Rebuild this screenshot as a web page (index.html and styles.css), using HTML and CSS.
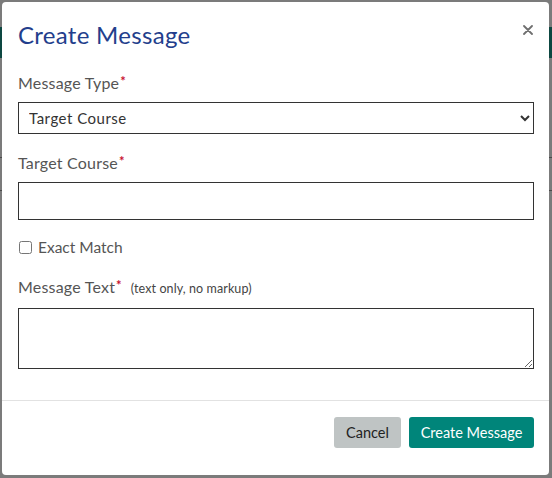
FILE: index.html
```html
<!DOCTYPE html>
<html>
<head>
<meta charset="utf-8">
<link rel="stylesheet" href="styles.css">
</head>
<body>
<div class="backdrop">
  <div class="bg-bar"></div>
  <div class="bg-line l1"></div>
  <div class="bg-line l2"></div>
</div>
<div class="modal">
  <div class="modal-header">
    <h1 class="modal-title">Create Message</h1>
    <button class="close" type="button" aria-label="Close">
      <svg width="10" height="10" viewBox="0 0 10 10"><path d="M1 1L9 9M9 1L1 9" stroke="#6f6f6f" stroke-width="1.8" stroke-linecap="round"/></svg>
    </button>
  </div>
  <div class="modal-body">
    <div class="field">
      <label class="label">Message Type<span class="req">*</span></label>
      <select class="select">
        <option>Target Course</option>
      </select>
    </div>
    <div class="field">
      <label class="label">Target Course<span class="req">*</span></label>
      <input class="input" type="text">
    </div>
    <div class="check-row">
      <input class="checkbox" type="checkbox" id="em">
      <label class="check-label" for="em">Exact Match</label>
    </div>
    <div class="field">
      <label class="label">Message Text<span class="req">*</span><span class="hint">(text only, no markup)</span></label>
      <textarea class="textarea"></textarea>
    </div>
  </div>
  <div class="modal-footer">
    <button class="btn btn-cancel" type="button">Cancel</button>
    <button class="btn btn-primary" type="button">Create Message</button>
  </div>
</div>
</body>
</html>
```
FILE: styles.css
```css
html, body {
  margin: 0;
  padding: 0;
  width: 552px;
  height: 478px;
  overflow: hidden;
  background: #7b7b7b;
  font-family: "Lato", "Open Sans", sans-serif;
}
.backdrop {
  position: absolute;
  inset: 0;
}
.bg-bar {
  position: absolute;
  left: 0;
  right: 0;
  top: 27px;
  height: 31px;
  background: #0d4741;
}
.bg-line {
  position: absolute;
  left: 0;
  right: 0;
  height: 1px;
  background: #4a4a4a;
}
.l1 { top: 157px; }
.l2 { top: 190px; }
.modal {
  position: absolute;
  left: 2px;
  top: 2px;
  width: 547px;
  height: 473px;
  background: #fff;
  border-radius: 4px;
  display: flex;
  flex-direction: column;
  box-sizing: border-box;
}
.modal-header {
  display: flex;
  justify-content: space-between;
  align-items: flex-start;
  padding: 19px 16px 0 16px;
}
.modal-title {
  margin: 0;
  font-size: 24px;
  font-weight: 400;
  letter-spacing: 0.3px;
  color: #233e8c;
  line-height: 28px;
}
.close {
  border: 0;
  background: none;
  padding: 0;
  margin: 4px 0 0 0;
  width: 10px;
  height: 10px;
  display: flex;
}
.modal-body {
  padding: 24px 16px 0 16px;
  flex: 1;
}
.field {
  display: flex;
  flex-direction: column;
  margin-bottom: 19px;
}
.label {
  font-size: 16px;
  letter-spacing: 0.2px;
  color: #555;
  line-height: 20px;
  margin-bottom: 9px;
}
.req {
  color: #c8102e;
  font-size: 13px;
  font-weight: 700;
  vertical-align: top;
  line-height: 17px;
  margin-left: 1px;
}
.hint {
  font-size: 12.5px;
  letter-spacing: 0.1px;
  color: #444;
  margin-left: 9px;
}
.select {
  height: 32px;
  border: 1px solid #333;
  border-radius: 0;
  background: #fff;
  font-family: "Lato", sans-serif;
  font-size: 15px;
  letter-spacing: 0.5px;
  color: #333;
  padding: 0 6px;
  box-sizing: border-box;
  width: 516px;
}
.input {
  height: 38px;
  border: 1px solid #333;
  border-radius: 0;
  box-sizing: border-box;
  width: 516px;
  margin: 0;
}
.check-row {
  display: flex;
  align-items: center;
  margin-top: -1px;
  margin-bottom: 21px;
}
.checkbox {
  margin: 0 6px 0 1px;
  width: 13px;
  height: 13px;
}
.check-label {
  font-size: 15.5px;
  color: #555;
}
.textarea {
  height: 61px;
  width: 516px;
  box-sizing: border-box;
  border: 1px solid #333;
  border-radius: 0;
  margin: 0;
}
.modal-footer {
  border-top: 1px solid #e2e2e2;
  display: flex;
  justify-content: flex-end;
  gap: 8px;
  padding: 16px 15px 27px 16px;
}
.btn {
  height: 31px;
  border: 0;
  border-radius: 3px;
  font-family: "Lato", sans-serif;
  font-size: 14.5px;
  padding: 0 10px;
}
.btn-cancel {
  background: #bfc4c4;
  color: #222;
  width: 67px;
}
.btn-primary {
  background: #00857a;
  color: #fff;
  width: 125px;
}
```
